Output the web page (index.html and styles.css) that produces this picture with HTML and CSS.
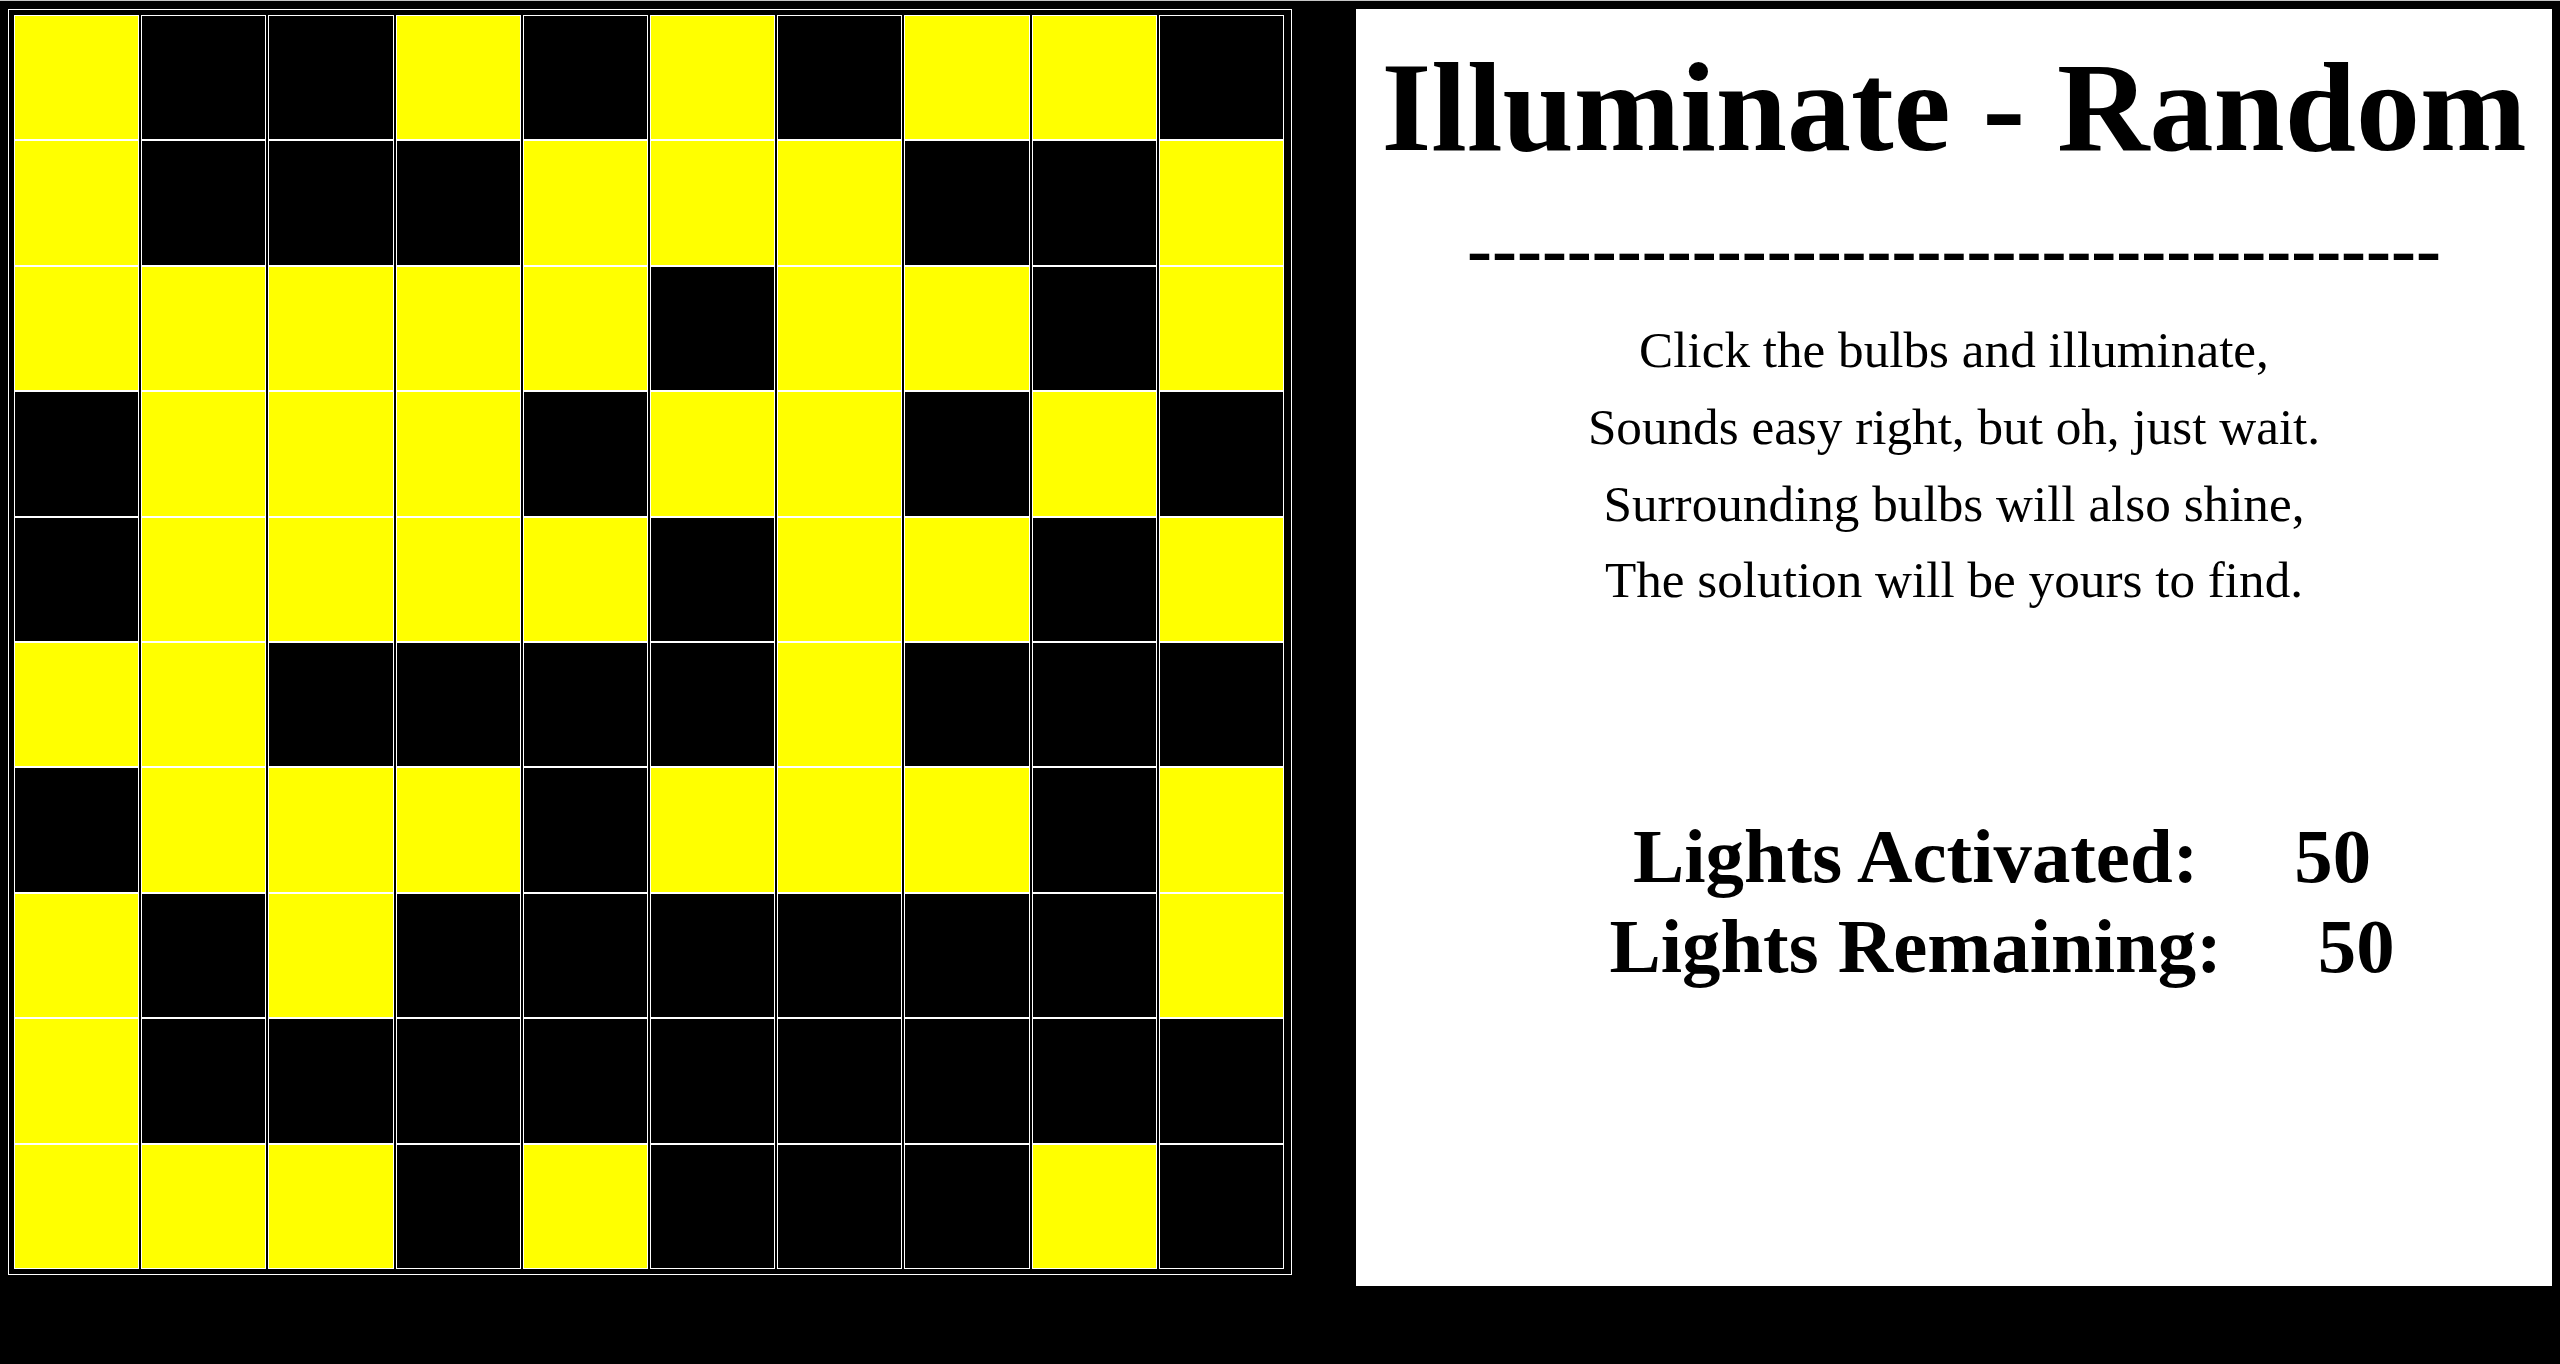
FILE: index.html
```html
<!DOCTYPE html>
<html lang="en">
<head>
<meta charset="utf-8">
<title>Illuminate - Random</title>
<link rel="stylesheet" href="styles.css">
</head>
<body>
<main class="page">
  <section class="board">
    <div class="grid">
      <div class="cell on"></div><div class="cell"></div><div class="cell"></div><div class="cell on"></div><div class="cell"></div><div class="cell on"></div><div class="cell"></div><div class="cell on"></div><div class="cell on"></div><div class="cell"></div>
      <div class="cell on"></div><div class="cell"></div><div class="cell"></div><div class="cell"></div><div class="cell on"></div><div class="cell on"></div><div class="cell on"></div><div class="cell"></div><div class="cell"></div><div class="cell on"></div>
      <div class="cell on"></div><div class="cell on"></div><div class="cell on"></div><div class="cell on"></div><div class="cell on"></div><div class="cell"></div><div class="cell on"></div><div class="cell on"></div><div class="cell"></div><div class="cell on"></div>
      <div class="cell"></div><div class="cell on"></div><div class="cell on"></div><div class="cell on"></div><div class="cell"></div><div class="cell on"></div><div class="cell on"></div><div class="cell"></div><div class="cell on"></div><div class="cell"></div>
      <div class="cell"></div><div class="cell on"></div><div class="cell on"></div><div class="cell on"></div><div class="cell on"></div><div class="cell"></div><div class="cell on"></div><div class="cell on"></div><div class="cell"></div><div class="cell on"></div>
      <div class="cell on"></div><div class="cell on"></div><div class="cell"></div><div class="cell"></div><div class="cell"></div><div class="cell"></div><div class="cell on"></div><div class="cell"></div><div class="cell"></div><div class="cell"></div>
      <div class="cell"></div><div class="cell on"></div><div class="cell on"></div><div class="cell on"></div><div class="cell"></div><div class="cell on"></div><div class="cell on"></div><div class="cell on"></div><div class="cell"></div><div class="cell on"></div>
      <div class="cell on"></div><div class="cell"></div><div class="cell on"></div><div class="cell"></div><div class="cell"></div><div class="cell"></div><div class="cell"></div><div class="cell"></div><div class="cell"></div><div class="cell on"></div>
      <div class="cell on"></div><div class="cell"></div><div class="cell"></div><div class="cell"></div><div class="cell"></div><div class="cell"></div><div class="cell"></div><div class="cell"></div><div class="cell"></div><div class="cell"></div>
      <div class="cell on"></div><div class="cell on"></div><div class="cell on"></div><div class="cell"></div><div class="cell on"></div><div class="cell"></div><div class="cell"></div><div class="cell"></div><div class="cell on"></div><div class="cell"></div>
    </div>
  </section>
  <aside class="panel">
    <h1 class="title">Illuminate - Random</h1>
    <div class="divider">---------------------------------------</div>
    <p class="poem">Click the bulbs and illuminate,<br>Sounds easy right, but oh, just wait.<br>Surrounding bulbs will also shine,<br>The solution will be yours to find.</p>
    <div class="stats">
      <div class="stat">&nbsp;&nbsp;&nbsp;&nbsp;&nbsp;Lights Activated:&nbsp;&nbsp;&nbsp;&nbsp;&nbsp;<span class="num">50</span></div>
      <div class="stat">&nbsp;&nbsp;&nbsp;&nbsp;&nbsp;Lights Remaining:&nbsp;&nbsp;&nbsp;&nbsp;&nbsp;<span class="num">50</span></div>
    </div>
  </aside>
</main>
</body>
</html>
```
FILE: styles.css
```css
html {
  border-top: 1px solid #c6c6c6;
  background: #000;
}

body {
  margin: 8px;
  background: #000;
  font-family: "Liberation Serif", "Times New Roman", serif;
  color: #000;
}

.page {
  display: flex;
  justify-content: space-between;
  align-items: flex-start;
}

.board {
  border: 1px solid #fff;
  padding: 5px 7px 5px 5px;
}

.grid {
  width: 1270px;
  height: 1254px;
  display: grid;
  grid-template-columns: repeat(10, 1fr);
  grid-template-rows: repeat(10, 1fr);
  column-gap: 2px;
}

.cell {
  border: 1px solid #fff;
  background: #000;
}

.cell.on {
  background: #ffff00;
}

.panel {
  width: 1196px;
  height: 1277px;
  background: #fff;
  text-align: center;
  padding-top: 28px;
  box-sizing: border-box;
}

.title {
  margin: 0;
  font-size: 128px;
  line-height: 140px;
  font-weight: bold;
}

.divider {
  margin-top: 27px;
  font-size: 75px;
  line-height: 90px;
  font-weight: bold;
}

.poem {
  margin: 18px 0 0;
  font-size: 51.2px;
  line-height: 76.8px;
}

.stats {
  margin-top: 193px;
}

.stat {
  font-size: 76.8px;
  line-height: 90px;
  font-weight: bold;
}
```
